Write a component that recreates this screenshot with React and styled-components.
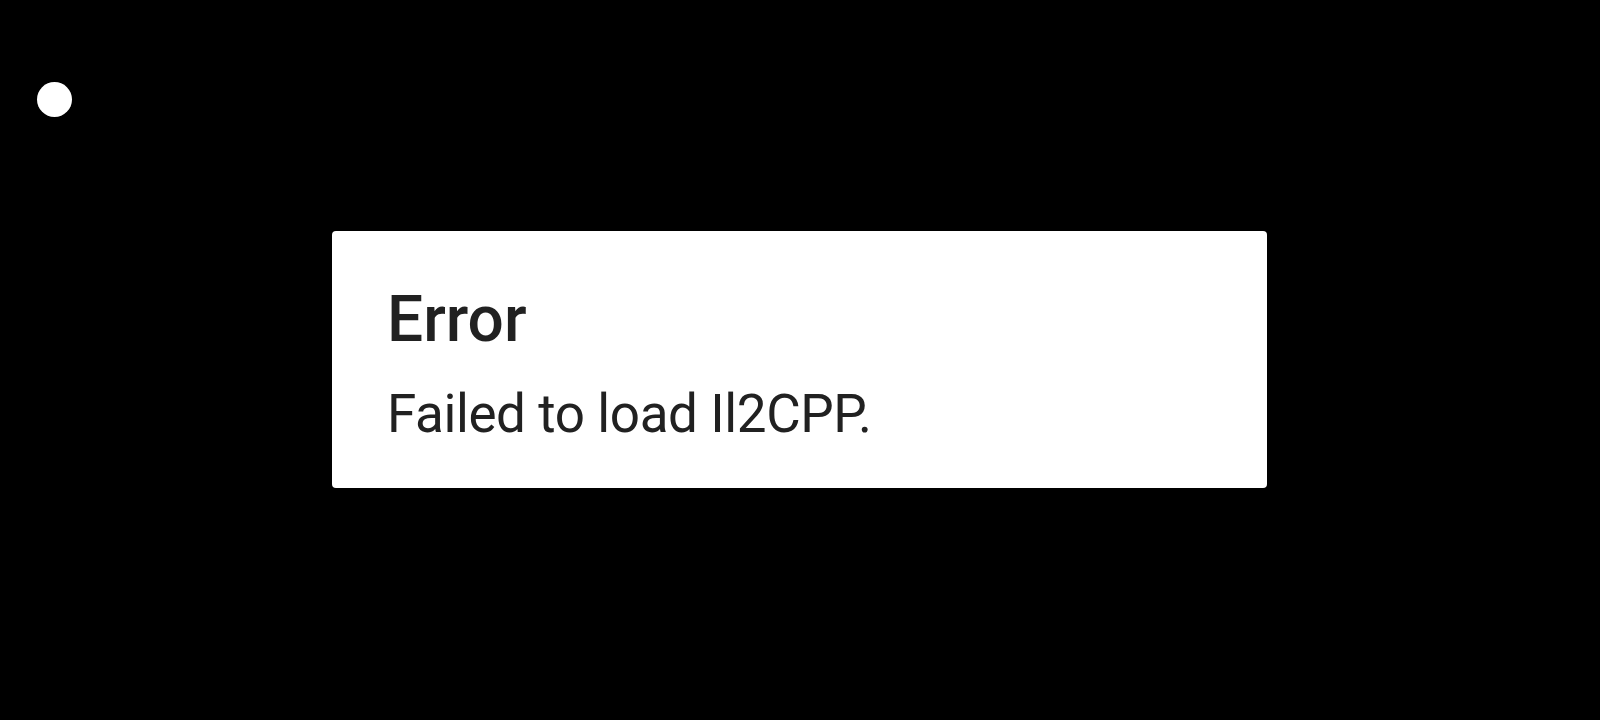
import React from 'react';
import styled, { createGlobalStyle } from 'styled-components';

const GlobalStyle = createGlobalStyle`
  html, body {
    margin: 0;
    padding: 0;
    background: #000000;
  }
  body {
    font-family: Roboto, "Noto Sans", Arial, sans-serif;
  }
`;

const Screen = styled.div`
  position: relative;
  width: 100%;
  height: 720px;
  background: #000000;
  display: flex;
  align-items: center;
  justify-content: center;
  overflow: hidden;
`;

// touch indicator dot floating over the screen
const TouchDot = styled.div`
  position: absolute;
  left: 37px;
  top: 82px;
  width: 35px;
  height: 35px;
  border-radius: 50%;
  background: #ffffff;
`;

const Dialog = styled.div`
  width: 935px;
  height: 257px;
  margin: 0 1px 1px 0;
  box-sizing: border-box;
  padding: 51px 55px 0 55px;
  background: #ffffff;
  border-radius: 4px;
  display: flex;
  flex-direction: column;
  gap: 24px;
`;

const Title = styled.h1`
  margin: 0;
  color: #212121;
  font-family: Roboto, sans-serif;
  font-weight: 500;
  font-size: 64px;
  line-height: 76px;
`;

const Message = styled.p`
  margin: 0;
  color: #212121;
  font-family: Roboto, sans-serif;
  font-weight: 400;
  font-size: 53px;
  line-height: 64px;
  letter-spacing: -0.4px;
`;

const App = () => {
  return (
    <>
      <GlobalStyle />
      <Screen>
        <TouchDot />
        <Dialog>
          <Title>Error</Title>
          <Message>Failed to load Il2CPP.</Message>
        </Dialog>
      </Screen>
    </>
  );
};

export default App;
